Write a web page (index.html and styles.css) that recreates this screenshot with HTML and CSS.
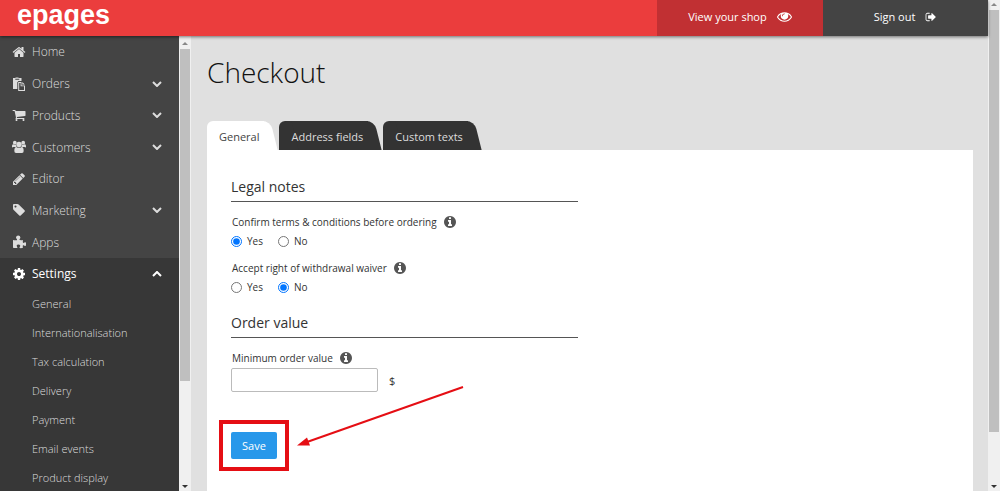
FILE: index.html
```html
<!DOCTYPE html>
<html lang="en">
<head>
    <meta charset="UTF-8">
    <meta name="viewport" content="width=device-width, initial-scale=1.0">
    <title>Checkout - epages</title>
    <link rel="stylesheet" href="styles.css">
</head>
<body>
    <div class="app">
        <header class="topbar">
            <a class="logo" href="#">epages</a>
            <a class="top-link shop" href="#">View your shop
                <svg class="icon-eye" viewBox="0 256 1792 1408"><path d="M1664 960q-152-236-381-353 61 104 61 225 0 185-131.500 316.500t-316.500 131.500-316.500-131.500-131.500-316.500q0-121 61-225-229 117-381 353 133 205 333.500 326.500t434.500 121.500 434.500-121.500 333.500-326.500zm-720-384q0-20-14-34t-34-14q-125 0-214.500 89.500t-89.500 214.500q0 20 14 34t34 14 34-14 14-34q0-86 61-147t147-61q20 0 34-14t14-34zm848 384q0 34-20 69-140 230-376.500 368.500t-499.500 138.500-499.500-139-376.500-368q-20-35-20-69t20-69q140-229 376.500-368t499.500-139 499.500 139 376.500 368q20 35 20 69z"/></svg>
            </a>
            <a class="top-link signout" href="#">Sign out
                <svg class="icon-out" viewBox="0 128 1792 1536"><path d="M704 1440q0 4 1 20t.5 26.500-3 23.500-10 19.500-20.500 6.500h-320q-119 0-203.500-84.500t-84.500-203.500v-704q0-119 84.500-203.500t203.500-84.500h320q13 0 22.500 9.500t9.500 22.500q0 4 1 20t.5 26.500-3 23.500-10 19.500-20.500 6.500h-320q-66 0-113 47t-47 113v704q0 66 47 113t113 47h312l11.500 1 11.500 3 8 5.500 7 9 2 13.500zm928-544q0 26-19 45l-544 544q-19 19-45 19t-45-19-19-45v-288h-448q-26 0-45-19t-19-45v-384q0-26 19-45t45-19h448v-288q0-26 19-45t45-19 45 19l544 544q19 19 19 45z"/></svg>
            </a>
        </header>

        <div class="content">
            <nav class="sidebar">
                <div class="menu">
                    <a class="menu-item" href="#">
                        <svg class="icon" viewBox="0 0 1792 1792"><path d="M1472 992v480q0 26-19 45t-45 19h-384v-384h-256v384h-384q-26 0-45-19t-19-45v-480q0-1 .5-3t.5-3l575-474 575 474q1 2 1 6zm223-69l-62 74q-8 9-21 11h-3q-13 0-21-7l-692-577-692 577q-12 8-24 7-13-2-21-11l-62-74q-8-10-7-23.500t11-21.500l719-599q32-26 76-26t76 26l244 204v-195q0-14 9-23t23-9h192q14 0 23 9t9 23v408l219 182q10 8 11 21.500t-7 23.500z"/></svg>
                        Home
                    </a>
                    <a class="menu-item" href="#">
                        <svg class="icon" viewBox="0 0 14 14"><path fill-rule="evenodd" d="M1 1h2.500V.5h3V1H9.500v3H6.500L5.300 5.200V12H1zM3.300 1.700v1h4v-1zM6.200 5h3.300v3.400H13V14H6.200zM7.200 6v7H12V9.300H8.600V6zM10.300 5.100l2.600 2.500h-2.600z"/></svg>
                        Orders
                        <svg class="chevron" viewBox="0 0 10 6"><path d="M1 1l4 4 4-4"/></svg>
                    </a>
                    <a class="menu-item" href="#">
                        <svg class="icon" viewBox="0 0 1792 1792"><path d="M704 1536q0 52-38 90t-90 38-90-38-38-90 38-90 90-38 90 38 38 90zm896 0q0 52-38 90t-90 38-90-38-38-90 38-90 90-38 90 38 38 90zm128-1088v512q0 24-16.500 42.500t-40.500 21.500l-1044 122q13 60 13 70 0 16-24 64h920q26 0 45 19t19 45-19 45-45 19h-1024q-26 0-45-19t-19-45q0-11 8-31.500t16-36 21.500-40 15.500-29.500l-177-823h-204q-26 0-45-19t-19-45 19-45 45-19h256q16 0 28.500 6.500t19.500 15.500 13 24.500 8 26 5.500 29.500 4.500 26h1201q26 0 45 19t19 45z"/></svg>
                        Products
                        <svg class="chevron" viewBox="0 0 10 6"><path d="M1 1l4 4 4-4"/></svg>
                    </a>
                    <a class="menu-item" href="#">
                        <svg class="icon" viewBox="0 0 15 14"><circle cx="3" cy="2.400" r="2"/><circle cx="12" cy="2.400" r="2"/><circle cx="7.500" cy="4.400" r="2.900"/><path d="M0 7.500V6q0-2 1.300-2 1.700 1 3 .5Q4.300 6 5 7H1.500Q.5 7 0 7.500zM15 7.500V6q0-2-1.300-2-1.700 1-3 .5Q10.700 6 10 7h3.500q1 0 1.500.5zM4.700 7q2.800 1.800 5.600 0 2.200 0 2.200 4.200 0 2.300-1.800 2.300H4.300q-1.800 0-1.800-2.300Q2.500 7 4.700 7z"/></svg>
                        Customers
                        <svg class="chevron" viewBox="0 0 10 6"><path d="M1 1l4 4 4-4"/></svg>
                    </a>
                    <a class="menu-item" href="#">
                        <svg class="icon" viewBox="0 0 1792 1792"><path d="M491 1536l91-91-235-235-91 91v107h128v128h107zm523-928q0-22-22-22-10 0-17 7l-542 542q-7 7-7 17 0 22 22 22 10 0 17-7l542-542q7-7 7-17zm-54-192l416 416-832 832h-416v-416zm683 96q0 53-37 90l-166 166-416-416 166-165q36-38 90-38 53 0 91 38l235 234q37 39 37 91z"/></svg>
                        Editor
                    </a>
                    <a class="menu-item" href="#">
                        <svg class="icon" viewBox="0 0 1792 1792"><path d="M576 448q0-53-37.500-90.500t-90.500-37.500-90.500 37.500-37.500 90.500 37.500 90.500 90.500 37.500 90.500-37.500 37.500-90.500zm1067 576q0 53-37 90l-491 492q-39 37-91 37-53 0-90-37l-715-716q-38-37-64.500-101t-26.500-117v-416q0-52 38-90t90-38h416q53 0 117 26.500t102 64.500l715 714q37 39 37 91z"/></svg>
                        Marketing
                        <svg class="chevron" viewBox="0 0 10 6"><path d="M1 1l4 4 4-4"/></svg>
                    </a>
                    <a class="menu-item" href="#">
                        <svg class="icon" viewBox="0 0 14 14"><path d="M1 5q2 .6 3.800.2.500-.4 0-1.200Q4 3.200 4 2.400 4.200.5 6.200.5t2.200 1.900q0 .8-.7 1.500-.6.900.2 1.200Q9.500 5.300 11 5q-.3 1.300-.1 2.600.3.800 1 .2.700-.7 1.300-.6 1.300.3 1.300 1.900t-1.400 1.900q-.7 0-1.400-.7-.6-.4-.9.300-.1 1.100.2 2.200-1.800.6-3.200.2-.6-.4 0-1.200.6-.7.400-1.400-.4-1-1.800-1-1.500.1-1.700 1.100-.1.700.5 1.400.6.800-.2 1.100Q3 13.300 1 12.800z"/></svg>
                        Apps
                    </a>
                </div>

                <div class="settings">
                    <a class="menu-item active" href="#">
                        <svg class="icon" viewBox="0 0 1792 1792"><path d="M1152 896q0-106-75-181t-181-75-181 75-75 181 75 181 181 75 181-75 75-181zm512-109v222q0 12-8 23t-20 13l-185 28q-19 54-39 91 35 50 107 138 10 12 10 25t-9 23q-27 37-99 108t-94 71q-12 0-26-9l-138-108q-44 23-91 38-16 136-29 186-7 28-36 28h-222q-14 0-24.500-8.500t-11.500-21.500l-28-184q-49-16-90-37l-141 107q-10 9-25 9-14 0-25-11-126-114-165-168-7-10-7-23 0-12 8-23 15-21 51-66.500t54-70.500q-27-50-41-99l-183-27q-13-2-21-12.500t-8-23.500v-222q0-12 8-23t19-13l186-28q14-46 39-92-40-57-107-138-10-12-10-24 0-10 9-23 26-36 98.500-107.500t94.500-71.500q13 0 26 10l138 107q44-23 91-38 16-136 29-186 7-28 36-28h222q14 0 24.500 8.500t11.500 21.500l28 184q49 16 90 37l142-107q9-9 24-9 13 0 25 10 129 119 165 170 7 8 7 22 0 12-8 23-15 21-51 66.500t-54 70.500q26 50 41 98l183 28q13 2 21 12.500t8 23.500z"/></svg>
                        Settings
                        <svg class="chevron" viewBox="0 0 10 6"><path d="M1 5l4-4 4 4"/></svg>
                    </a>
                    <a class="sub-item" href="#">General</a>
                    <a class="sub-item" href="#">Internationalisation</a>
                    <a class="sub-item" href="#">Tax calculation</a>
                    <a class="sub-item" href="#">Delivery</a>
                    <a class="sub-item" href="#">Payment</a>
                    <a class="sub-item" href="#">Email events</a>
                    <a class="sub-item" href="#">Product display</a>
                </div>
            </nav>

            <div class="scrollbar side-scroll">
                <span class="arrow-up"></span>
                <span class="thumb"></span>
                <span class="arrow-down"></span>
            </div>

            <main class="main">
                <h1>Checkout</h1>
                <div class="tabs">
                    <a class="tab current" href="#">General</a>
                    <a class="tab" href="#">Address fields</a>
                    <a class="tab" href="#">Custom texts</a>
                </div>
                <form class="panel">
                    <section>
                        <h2>Legal notes</h2>
                        <fieldset>
                            <legend>Confirm terms &amp; conditions before ordering
                                <svg class="info" viewBox="128 128 1536 1536"><path d="M1152 1376v-160q0-14-9-23t-23-9h-96v-512q0-14-9-23t-23-9h-320q-14 0-23 9t-9 23v160q0 14 9 23t23 9h96v320h-96q-14 0-23 9t-9 23v160q0 14 9 23t23 9h448q14 0 23-9t9-23zm-128-896v-160q0-14-9-23t-23-9h-192q-14 0-23 9t-9 23v160q0 14 9 23t23 9h192q14 0 23-9t9-23zm640 416q0 209-103 385.500t-279.500 279.500-385.500 103-385.500-103-279.500-279.500-103-385.500 103-385.500 279.500-279.500 385.500-103 385.500 103 279.500 279.500 103 385.500z"/></svg>
                            </legend>
                            <div class="radios">
                                <label><input type="radio" name="terms" checked>Yes</label>
                                <label><input type="radio" name="terms">No</label>
                            </div>
                        </fieldset>
                        <fieldset>
                            <legend>Accept right of withdrawal waiver
                                <svg class="info" viewBox="128 128 1536 1536"><path d="M1152 1376v-160q0-14-9-23t-23-9h-96v-512q0-14-9-23t-23-9h-320q-14 0-23 9t-9 23v160q0 14 9 23t23 9h96v320h-96q-14 0-23 9t-9 23v160q0 14 9 23t23 9h448q14 0 23-9t9-23zm-128-896v-160q0-14-9-23t-23-9h-192q-14 0-23 9t-9 23v160q0 14 9 23t23 9h192q14 0 23-9t9-23zm640 416q0 209-103 385.500t-279.500 279.500-385.500 103-385.500-103-279.500-279.500-103-385.500 103-385.500 279.500-279.500 385.500-103 385.500 103 279.500 279.500 103 385.500z"/></svg>
                            </legend>
                            <div class="radios">
                                <label><input type="radio" name="waiver">Yes</label>
                                <label><input type="radio" name="waiver" checked>No</label>
                            </div>
                        </fieldset>
                    </section>

                    <section>
                        <h2>Order value</h2>
                        <label class="field-label" for="minimum">Minimum order value
                            <svg class="info" viewBox="128 128 1536 1536"><path d="M1152 1376v-160q0-14-9-23t-23-9h-96v-512q0-14-9-23t-23-9h-320q-14 0-23 9t-9 23v160q0 14 9 23t23 9h96v320h-96q-14 0-23 9t-9 23v160q0 14 9 23t23 9h448q14 0 23-9t9-23zm-128-896v-160q0-14-9-23t-23-9h-192q-14 0-23 9t-9 23v160q0 14 9 23t23 9h192q14 0 23-9t9-23zm640 416q0 209-103 385.500t-279.500 279.500-385.500 103-385.500-103-279.500-279.500-103-385.500 103-385.500 279.500-279.500 385.500-103 385.500 103 279.500 279.500 103 385.500z"/></svg>
                        </label>
                        <div class="amount">
                            <input type="text" id="minimum">
                            <span>$</span>
                        </div>
                    </section>

                    <div class="save-area">
                        <button type="button" class="save">Save</button>
                        <span class="marker"></span>
                        <svg class="pointer" viewBox="0 0 168 64"><path class="line" d="M166 2L10 57"/><path d="M0 60.500L10 52.500 13 60.500z"/></svg>
                    </div>
                </form>
            </main>
        </div>
    </div>

    <div class="scrollbar page-scroll">
        <span class="arrow-up"></span>
        <span class="thumb"></span>
        <span class="arrow-down"></span>
    </div>
</body>
</html>
```
FILE: styles.css
```css
* {
    box-sizing: border-box;
}

body {
    margin: 0;
    height: 100vh;
    display: flex;
    overflow: hidden;
    font-family: "Open Sans", "Noto Sans", sans-serif;
    font-size: 11px;
    color: #333;
    background: #e0e0e0;
}

a {
    color: inherit;
    text-decoration: none;
}

svg {
    fill: currentColor;
    flex: none;
}

.app {
    flex: 1;
    min-width: 0;
    display: flex;
    flex-direction: column;
}

/* Top bar */
.topbar {
    position: relative;
    z-index: 1;
    height: 36px;
    flex: none;
    display: flex;
    background: #eb3d3d;
    box-shadow: 0 1px 3px rgba(0, 0, 0, 0.5);
    color: #fff;
}

.logo {
    flex: 1;
    padding-left: 17px;
    font-family: "Liberation Sans", Arial, sans-serif;
    font-size: 27px;
    font-weight: bold;
    line-height: 30px;
}

.top-link {
    width: 166px;
    display: flex;
    align-items: center;
    justify-content: center;
    gap: 10px;
    padding-bottom: 3px;
}

.shop {
    background: #c13033;
}

.signout {
    width: 165px;
    background: #444;
}

.icon-eye {
    width: 15px;
    height: 12px;
}

.icon-out {
    width: 12px;
    height: 10px;
}

/* Sidebar */
.content {
    flex: 1;
    min-height: 0;
    display: flex;
}

.sidebar {
    width: 179px;
    flex: none;
    overflow: hidden;
    background: #373737;
    color: #ddd;
    font-weight: 300;
}

.menu {
    height: 222px;
    display: flex;
    flex-direction: column;
    background: #444;
}

.menu-item {
    flex: 1;
    display: flex;
    align-items: center;
    gap: 6px;
    padding: 0 17px 0 12px;
    font-size: 12px;
}

.active {
    height: 31px;
    color: #fff;
    font-weight: 400;
}

.icon {
    width: 14px;
    height: 14px;
}

.chevron {
    width: 10px;
    height: 6px;
    margin-left: auto;
    fill: none;
    stroke: currentColor;
    stroke-width: 2;
}

.sub-item {
    display: block;
    padding-left: 32px;
    line-height: 29px;
}

/* Scrollbars */
.scrollbar {
    width: 12px;
    flex: none;
    display: flex;
    flex-direction: column;
    align-items: center;
    background: #f0f0f0;
}

.thumb {
    width: 10px;
    background: #bfbfbf;
}

.side-scroll .thumb {
    height: 73%;
    margin-bottom: auto;
}

.page-scroll .thumb {
    height: 86%;
    margin-bottom: auto;
}

.arrow-up,
.arrow-down {
    border: 3px solid transparent;
}

.arrow-up {
    margin-bottom: 4px;
    border-bottom-color: #888;
}

.arrow-down {
    border-top-color: #333;
}

.side-scroll .arrow-up {
    margin-top: 3px;
}

/* Main area */
.main {
    flex: 1;
    min-width: 0;
    display: flex;
    flex-direction: column;
    padding: 0 15px 0 16px;
}

h1 {
    margin: 16px 0 29px;
    font-size: 28px;
    font-weight: 300;
    line-height: 40px;
    color: #111;
}

.tabs {
    display: flex;
    gap: 1px;
}

.tab {
    position: relative;
    isolation: isolate;
    height: 29px;
    padding: 0 19px 0 12px;
    line-height: 31px;
    color: #ddd;
}

/* straight left edge and slanted right edge */
.tab::before,
.tab::after {
    content: "";
    position: absolute;
    z-index: -1;
    top: 0;
    bottom: 0;
    background: #333;
}

.tab::before {
    left: 0;
    right: 14px;
    border-top-left-radius: 6px;
}

.tab::after {
    left: 16px;
    right: 4px;
    border-top-right-radius: 8px;
    transform: skewX(14deg);
}

.current {
    color: #444;
}

.current::before,
.current::after {
    background: #fff;
}

.panel {
    flex: 1;
    padding: 24px 24px 0;
    background: #fff;
}

section + section {
    margin-top: 14px;
}

h2 {
    max-width: 347px;
    margin: 0 0 10px;
    padding-bottom: 2px;
    border-bottom: 1px solid #555;
    font-size: 14px;
    font-weight: 400;
    line-height: 25px;
}

fieldset {
    margin: 0;
    padding: 0;
    border: 0;
}

fieldset + fieldset {
    margin-top: 8px;
}

legend,
.field-label {
    display: flex;
    align-items: center;
    gap: 7px;
    padding: 0 1px;
    font-size: 10px;
    line-height: 20px;
}

.info {
    width: 12px;
    height: 12px;
    color: #555;
}

.radios {
    display: flex;
    gap: 15px;
}

.radios label {
    display: flex;
    align-items: center;
    gap: 5px;
    font-size: 10px;
    line-height: 18px;
}

.radios input {
    width: 11px;
    height: 11px;
    margin: 0;
}

.amount {
    display: flex;
    align-items: center;
    gap: 11px;
}

.amount input {
    width: 147px;
    height: 24px;
    border: 1px solid #bbb;
    border-radius: 2px;
}

.save-area {
    position: relative;
    width: 46px;
    margin-top: 40px;
}

.save {
    display: block;
    width: 100%;
    height: 27px;
    padding: 0;
    border: 0;
    border-radius: 2px;
    background: #2898ea;
    color: #fff;
    font: inherit;
}

/* highlight drawn over the save button */
.marker {
    position: absolute;
    inset: -12px;
    border: 4px solid #e50e14;
}

.pointer {
    position: absolute;
    left: 66px;
    bottom: 10px;
    width: 168px;
    height: 64px;
    color: #e50e14;
}

.line {
    stroke: currentColor;
    stroke-width: 2;
}
```
